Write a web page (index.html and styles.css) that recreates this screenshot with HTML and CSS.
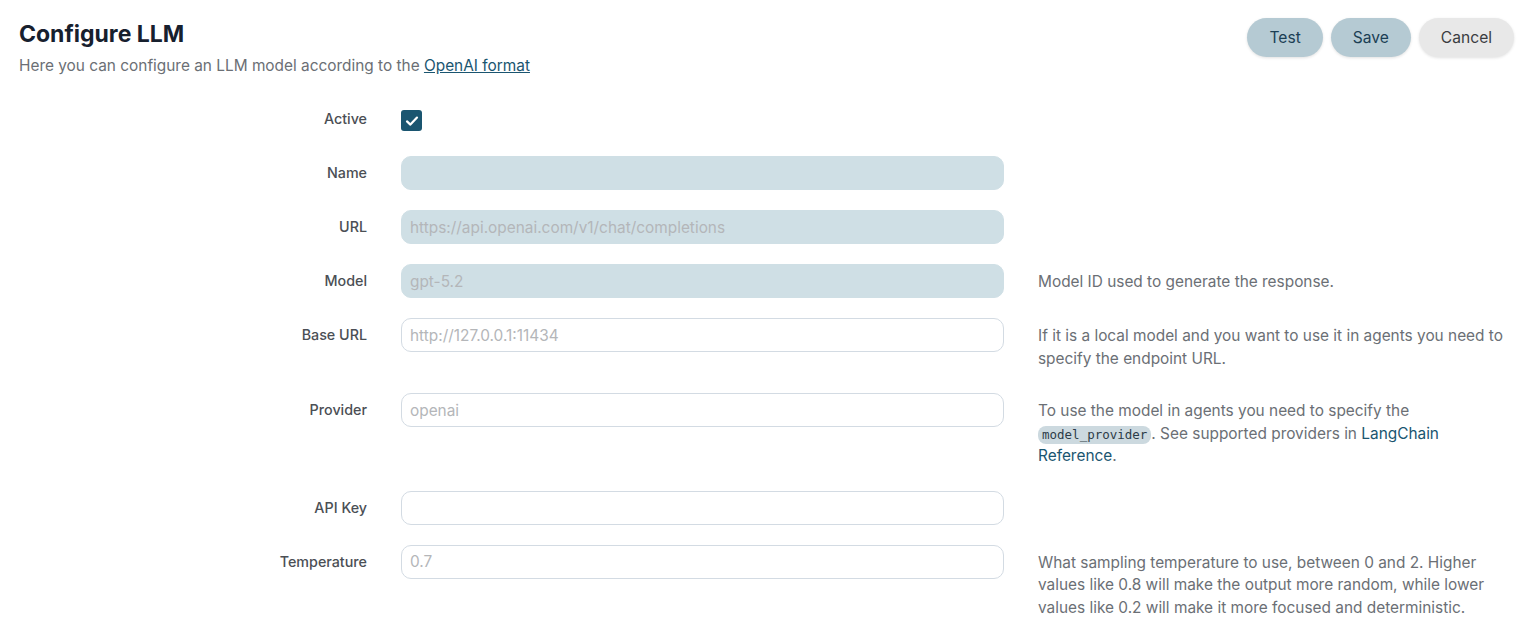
FILE: index.html
```html
<!DOCTYPE html>
<html lang="en">
<head>
<meta charset="utf-8">
<title>Configure LLM</title>
<link rel="stylesheet" href="styles.css">
</head>
<body>
<div class="page">
  <header class="header">
    <div class="titles">
      <h1 class="title">Configure LLM</h1>
      <p class="subtitle">Here you can configure an LLM model according to the <a class="link" href="#">OpenAI format</a></p>
    </div>
    <div class="actions">
      <button class="btn btn-primary">Test</button>
      <button class="btn btn-primary">Save</button>
      <button class="btn btn-secondary">Cancel</button>
    </div>
  </header>

  <form class="form">
    <div class="row row-check">
      <label class="label">Active</label>
      <div class="field">
        <span class="checkbox">
          <svg width="16" height="16" viewBox="0 0 16 16"><path d="M3 8.4 L6.4 11.6 L13 4.6" fill="none" stroke="#fff" stroke-width="2.2" stroke-linecap="round" stroke-linejoin="round"/></svg>
        </span>
      </div>
      <div class="desc"></div>
    </div>

    <div class="row">
      <label class="label">Name</label>
      <div class="field"><input class="input input-disabled" type="text" disabled></div>
      <div class="desc"></div>
    </div>

    <div class="row">
      <label class="label">URL</label>
      <div class="field"><input class="input input-disabled" type="text" placeholder="https://api.openai.com/v1/chat/completions" disabled></div>
      <div class="desc"></div>
    </div>

    <div class="row">
      <label class="label">Model</label>
      <div class="field"><input class="input input-disabled" type="text" placeholder="gpt-5.2" disabled></div>
      <div class="desc">Model ID used to generate the response.</div>
    </div>

    <div class="row">
      <label class="label">Base URL</label>
      <div class="field"><input class="input" type="text" placeholder="http://127.0.0.1:11434"></div>
      <div class="desc">If it is a local model and you want to use it in agents you need to specify the endpoint URL.</div>
    </div>

    <div class="row">
      <label class="label">Provider</label>
      <div class="field"><input class="input" type="text" placeholder="openai"></div>
      <div class="desc">To use the model in agents you need to specify the <code class="code">model_provider</code>. See supported providers in <a class="plain-link" href="#">LangChain Reference</a>.</div>
    </div>

    <div class="row">
      <label class="label">API Key</label>
      <div class="field"><input class="input" type="text"></div>
      <div class="desc"></div>
    </div>

    <div class="row">
      <label class="label">Temperature</label>
      <div class="field"><input class="input" type="text" placeholder="0.7"></div>
      <div class="desc">What sampling temperature to use, between 0 and 2. Higher values like 0.8 will make the output more random, while lower values like 0.2 will make it more focused and deterministic.</div>
    </div>
  </form>
</div>
</body>
</html>
```

FILE: styles.css
```css
* { box-sizing: border-box; }

html, body {
  margin: 0;
  padding: 0;
  background: #ffffff;
  font-family: Inter, "Noto Sans", sans-serif;
  color: #555b63;
}

.page {
  padding: 18px 14px 0 19px;
}

.header {
  display: flex;
  justify-content: space-between;
  align-items: flex-start;
}

.title {
  margin: 2px 0 0 0;
  font-size: 23px;
  font-weight: 700;
  line-height: 28px;
  color: #17202e;
}

.subtitle {
  margin: 8px 0 0 0;
  font-size: 15.4px;
  line-height: 20px;
  color: #6b6f75;
}

.link {
  color: #1a5570;
  text-decoration: underline;
}

.actions {
  display: flex;
  gap: 8px;
}

.btn {
  height: 39px;
  border: none;
  border-radius: 20px;
  font-family: Inter, "Noto Sans", sans-serif;
  font-size: 15.6px;
  padding: 0 22px;
  cursor: pointer;
  box-shadow: 0 1px 3px rgba(0,0,0,0.12);
}

.btn-primary {
  background: #b5cad3;
  color: #1c3f55;
}

.btn-secondary {
  background: #e8e8e8;
  color: #3a3d42;
}

.form {
  margin-top: 32px;
  display: flex;
  flex-direction: column;
  gap: 20px;
}

.row {
  display: grid;
  grid-template-columns: 348px 603px 1fr;
  column-gap: 34px;
  align-items: start;
}

.label {
  text-align: right;
  font-size: 14.3px;
  font-weight: 500;
  color: #4b4f55;
  line-height: 34px;
}

.row-check {
  height: 28px;
}

.row-check .label {
  line-height: 22px;
}

.field {
  display: flex;
}

.checkbox {
  width: 21px;
  height: 21px;
  border-radius: 3px;
  background: #1a5570;
  display: flex;
  align-items: center;
  justify-content: center;
  margin-top: 2px;
}

.input {
  width: 100%;
  height: 34px;
  border: 1px solid #d3dbe3;
  border-radius: 10px;
  padding: 0 8px;
  font-family: Inter, "Noto Sans", sans-serif;
  font-size: 15.4px;
  background: #ffffff;
  color: #333;
  outline: none;
}

.input::placeholder {
  color: #b4b6b9;
}

.input-disabled {
  background: #cfdfe5;
  border-color: #cfdfe5;
}

.desc {
  font-size: 15.4px;
  line-height: 22.5px;
  color: #6b6f75;
  padding-top: 7px;
  padding-bottom: 3px;
}

.desc:empty {
  padding: 0;
}

.code {
  display: inline-block;
  font-family: "DejaVu Sans Mono", "Liberation Mono", monospace;
  font-size: 12.5px;
  line-height: 18px;
  background: #ccd9df;
  color: #2c3c48;
  border-radius: 8px;
  padding: 0 4px;
}

.plain-link {
  color: #1a5570;
  text-decoration: none;
}
```
